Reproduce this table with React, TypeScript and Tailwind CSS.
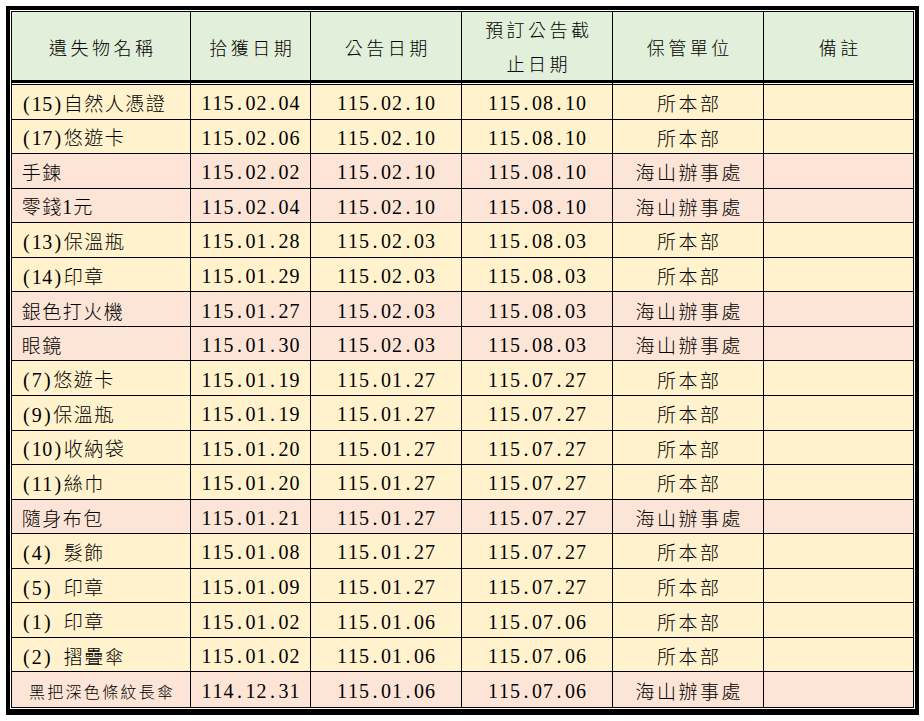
import React from "react";

type Row = [string, string, string, string, string];

const rows: Row[] = [
  ["(15)自然人憑證", "115.02.04", "115.02.10", "115.08.10", "所本部"],
  ["(17)悠遊卡", "115.02.06", "115.02.10", "115.08.10", "所本部"],
  ["手鍊", "115.02.02", "115.02.10", "115.08.10", "海山辦事處"],
  ["零錢1元", "115.02.04", "115.02.10", "115.08.10", "海山辦事處"],
  ["(13)保溫瓶", "115.01.28", "115.02.03", "115.08.03", "所本部"],
  ["(14)印章", "115.01.29", "115.02.03", "115.08.03", "所本部"],
  ["銀色打火機", "115.01.27", "115.02.03", "115.08.03", "海山辦事處"],
  ["眼鏡", "115.01.30", "115.02.03", "115.08.03", "海山辦事處"],
  ["(7)悠遊卡", "115.01.19", "115.01.27", "115.07.27", "所本部"],
  ["(9)保溫瓶", "115.01.19", "115.01.27", "115.07.27", "所本部"],
  ["(10)收納袋", "115.01.20", "115.01.27", "115.07.27", "所本部"],
  ["(11)絲巾", "115.01.20", "115.01.27", "115.07.27", "所本部"],
  ["隨身布包", "115.01.21", "115.01.27", "115.07.27", "海山辦事處"],
  ["(4) 髮飾", "115.01.08", "115.01.27", "115.07.27", "所本部"],
  ["(5) 印章", "115.01.09", "115.01.27", "115.07.27", "所本部"],
  ["(1) 印章", "115.01.02", "115.01.06", "115.07.06", "所本部"],
  ["(2) 摺疊傘", "115.01.02", "115.01.06", "115.07.06", "所本部"],
  ["黑把深色條紋長傘", "114.12.31", "115.01.06", "115.07.06", "海山辦事處"],
];

function Spaced({
  text,
  a,
  c,
}: {
  text: string;
  a: string;
  c: string;
}) {
  return (
    <>
      {Array.from(text).map((ch, i) =>
        ch.charCodeAt(0) < 128 ? (
          <span key={i} className={"inline-block text-center " + a}>
            {ch === " " ? "\u00a0" : ch}
          </span>
        ) : (
          <span key={i} className={"inline-block text-center " + c}>
            {ch}
          </span>
        )
      )}
    </>
  );
}

const ASCII = "w-[10.5px] text-[20px] font-['Liberation_Serif',serif]";
const DATE = "w-[11px] text-[20px] font-['Liberation_Serif',serif]";
const CJK = "w-[20.5px] text-[19px] font-['Noto_Sans_CJK_TC',sans-serif] font-light";
const CJK_SMALL = "w-[18.3px] text-[16px] font-['Noto_Sans_CJK_TC',sans-serif] font-light";
const CJK_UNIT = "w-[21.5px] text-[19px] font-['Noto_Sans_CJK_TC',sans-serif] font-light";
const HEAD = "w-[21.5px] text-[18px] font-['Noto_Sans_CJK_TC',sans-serif] font-light";

function Header({ children, last }: { children: React.ReactNode; last?: boolean }) {
  return (
    <div
      className={
        "bg-[#E2EFDA] border-b-[3px] border-black flex flex-col items-center justify-center pt-[2px] leading-[32px] " +
        (last ? "" : "border-r")
      }
    >
      {children}
    </div>
  );
}

export default function App() {
  return (
    <div className="bg-white w-[924px] h-[721px] pt-[6px] pl-[6px] text-black">
      <div className="w-[913px] border-black border-x-4 border-t-4 border-b-[6px] p-px bg-white">
        <div className="h-[697px] border border-black grid grid-cols-[179px_120px_151px_151px_151px_149px] grid-rows-[71px_2px_repeat(18,minmax(0,1fr))]">
          <Header>
            <div className="leading-none"><Spaced text="遺失物名稱" a={ASCII} c={HEAD} /></div>
          </Header>
          <Header>
            <div className="leading-none"><Spaced text="拾獲日期" a={ASCII} c={HEAD} /></div>
          </Header>
          <Header>
            <div className="leading-none"><Spaced text="公告日期" a={ASCII} c={HEAD} /></div>
          </Header>
          <Header>
            <div className="leading-[32px]"><Spaced text="預訂公告截" a={ASCII} c={HEAD} /></div>
            <div className="leading-[32px]"><Spaced text="止日期" a={ASCII} c={HEAD} /></div>
          </Header>
          <Header>
            <div className="leading-none"><Spaced text="保管單位" a={ASCII} c={HEAD} /></div>
          </Header>
          <Header last>
            <div className="leading-none"><Spaced text="備註" a={ASCII} c={HEAD} /></div>
          </Header>

          {[0, 1, 2, 3, 4, 5].map((i) => (
            <div
              key={"sp" + i}
              className={"bg-white border-b border-black " + (i < 5 ? "border-r" : "")}
            />
          ))}

          {rows.map((r, ri) => {
            const bg = r[4] === "所本部" ? "bg-[#FFF2CC]" : "bg-[#FCE4D6]";
            const bb = ri < rows.length - 1 ? "border-b" : "";
            const cell = `${bg} ${bb} border-black flex items-center pt-[3px] leading-none`;
            const small = r[0] === "黑把深色條紋長傘";
            return (
              <React.Fragment key={ri}>
                <div className={`${cell} border-r ${small ? "justify-center" : "pl-[9px]"}`}>
                  <div>
                    <Spaced text={r[0]} a={ASCII} c={small ? CJK_SMALL : CJK} />
                  </div>
                </div>
                <div className={`${cell} border-r justify-center`}>
                  <div><Spaced text={r[1]} a={DATE} c={CJK} /></div>
                </div>
                <div className={`${cell} border-r justify-center`}>
                  <div><Spaced text={r[2]} a={DATE} c={CJK} /></div>
                </div>
                <div className={`${cell} border-r justify-center`}>
                  <div><Spaced text={r[3]} a={DATE} c={CJK} /></div>
                </div>
                <div className={`${cell} border-r justify-center`}>
                  <div><Spaced text={r[4]} a={ASCII} c={CJK_UNIT} /></div>
                </div>
                <div className={`${cell}`} />
              </React.Fragment>
            );
          })}
        </div>
      </div>
    </div>
  );
}
